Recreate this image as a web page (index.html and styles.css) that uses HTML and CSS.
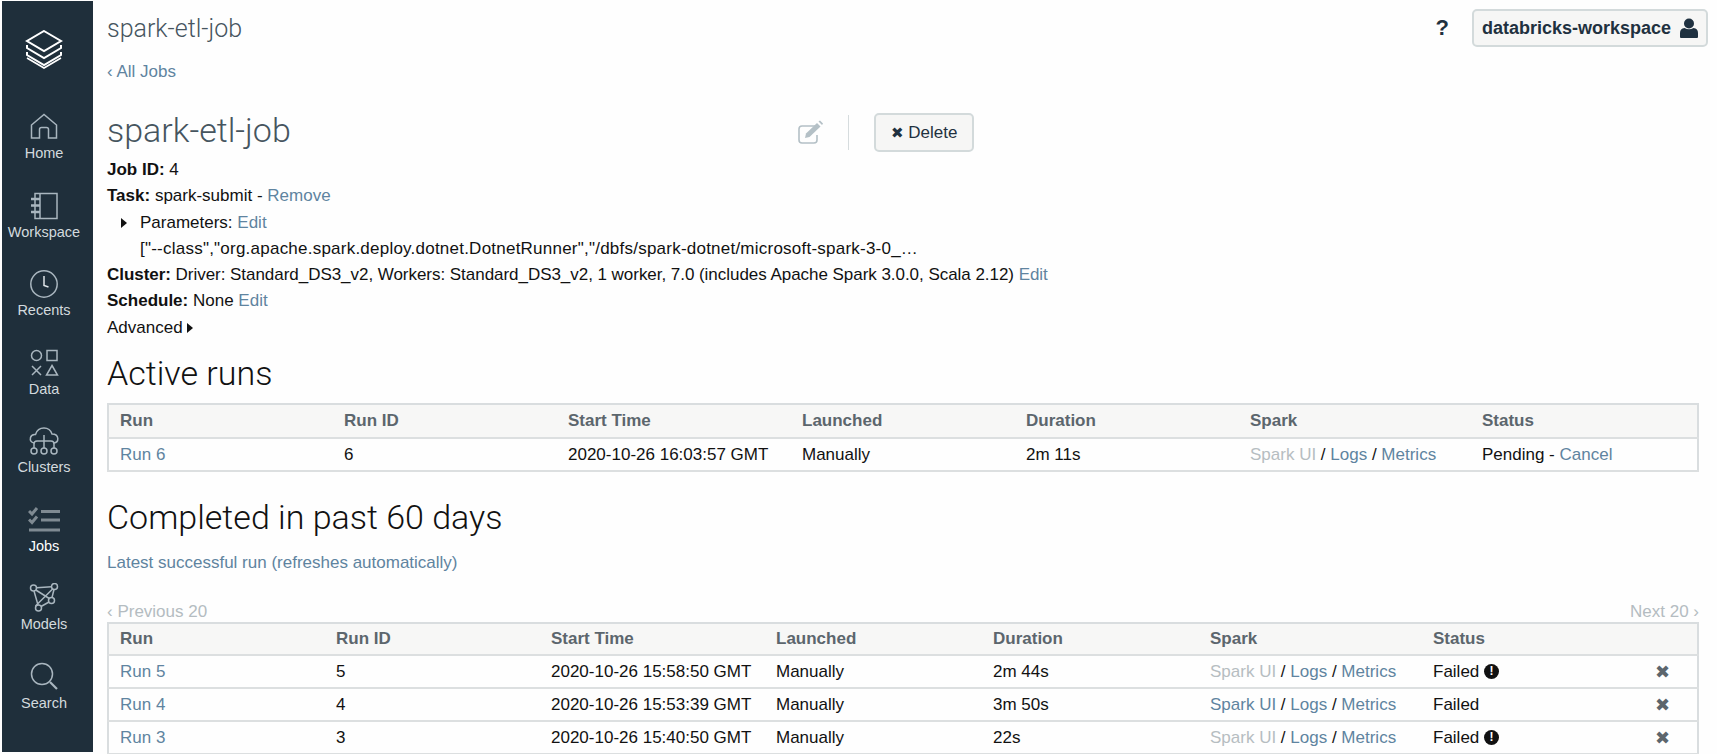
FILE: index.html
```html
<!DOCTYPE html>
<html lang="en">
<head>
    <meta charset="UTF-8">
    <title>spark-etl-job</title>
    <link rel="stylesheet" href="styles.css">
</head>
<body>
    <nav class="sidebar">
        <div class="logo">
            <svg width="38" height="40" viewBox="0 0 38 40" fill="none" stroke="#fff" stroke-width="2">
                <path d="M19 1 L36 11 L19 21 L2 11 Z"/>
                <path d="M2 15 V18 L19 28 L36 18 V15"/>
                <path d="M2 22 V25 L19 35 L36 25 V22"/>
                <path d="M2 28 L19 38 L36 28" stroke-width="1.6"/>
            </svg>
        </div>
        <a class="nav-item">
            <svg width="30" height="30" viewBox="0 0 30 30" fill="none" stroke="#a9b6bf" stroke-width="1.5">
                <path d="M2.5 13 L15 2.5 L27.5 13 V26 H19.5 V17.5 Q19.5 15.5 17.5 15.5 H12.5 Q10.5 15.5 10.5 17.5 V26 H2.5 Z"/>
            </svg>
            <span>Home</span>
        </a>
        <a class="nav-item">
            <svg width="30" height="30" viewBox="0 0 30 30" fill="none" stroke="#a9b6bf" stroke-width="1.5">
                <rect x="6" y="2.5" width="22" height="25"/>
                <path d="M11 2.5 V27.5"/>
                <path d="M2 8 H11 M2 14.5 H11 M2 21 H11" stroke-width="2.4"/>
            </svg>
            <span>Workspace</span>
        </a>
        <a class="nav-item">
            <svg width="30" height="30" viewBox="0 0 30 30" fill="none" stroke="#a9b6bf" stroke-width="1.5">
                <circle cx="15" cy="15" r="13.2"/>
                <path d="M15 7 V16.5 L19.5 18" stroke="#dfe5e9"/>
            </svg>
            <span>Recents</span>
        </a>
        <a class="nav-item">
            <svg width="30" height="30" viewBox="0 0 30 30" fill="none" stroke="#a9b6bf" stroke-width="1.5">
                <circle cx="7.5" cy="7.5" r="5"/>
                <rect x="18" y="2.5" width="10" height="10"/>
                <path d="M3 18 L12 27 M12 18 L3 27"/>
                <path d="M23 17.5 L28.5 27 H17.5 Z"/>
            </svg>
            <span>Data</span>
        </a>
        <a class="nav-item">
            <svg width="30" height="30" viewBox="0 0 30 30" fill="none" stroke="#a9b6bf" stroke-width="1.5">
                <path d="M5 17 Q0.5 16 1.5 11.5 Q2.5 8 6.5 8.5 Q8.5 2 15 2 Q21 2 23 8 Q28.5 8 28.8 12.5 Q29 16.5 25 17"/>
                <path d="M15 9 V22 M5 22 V18 Q5 15 8 15 H22 Q25 15 25 18 V22"/>
                <circle cx="5" cy="25" r="3"/>
                <circle cx="15" cy="25" r="3"/>
                <circle cx="25" cy="25" r="3"/>
            </svg>
            <span>Clusters</span>
        </a>
        <a class="nav-item active">
            <svg width="32" height="30" viewBox="0 0 32 30" fill="none" stroke="#7f8a92" stroke-width="3">
                <path d="M13 6.5 H32 M13 15 H32 M1 25 H32"/>
                <path d="M1 6 L4 9 L9 3 M1 14.5 L4 17.5 L9 11.5" stroke-width="3"/>
            </svg>
            <span>Jobs</span>
        </a>
        <a class="nav-item">
            <svg width="30" height="30" viewBox="0 0 30 30" fill="none" stroke="#a9b6bf" stroke-width="1.5">
                <circle cx="4.5" cy="5" r="3"/>
                <circle cx="25.5" cy="3.5" r="3"/>
                <circle cx="22.5" cy="17.5" r="3"/>
                <circle cx="9.5" cy="25" r="3"/>
                <path d="M7.5 4.7 L22.5 3.7 M25 6.5 L23 14.5 M20 19 L12 23.5 M9 22 L5 8 M6.8 7 L20.3 15.5 M23.6 6 L6.5 23"/>
            </svg>
            <span>Models</span>
        </a>
        <a class="nav-item">
            <svg width="30" height="30" viewBox="0 0 30 30" fill="none" stroke="#a9b6bf" stroke-width="1.5">
                <circle cx="13" cy="12" r="10.5"/>
                <path d="M21 20 L28 27" stroke-width="2.2"/>
            </svg>
            <span>Search</span>
        </a>
    </nav>

    <main class="content">
        <header class="topbar">
            <div class="page-name">spark-etl-job</div>
            <div class="help">?</div>
            <button class="account">
                databricks-workspace
                <svg width="18" height="20" viewBox="0 0 18 20" fill="#1f3140">
                    <circle cx="9" cy="5.5" r="5"/>
                    <path d="M0 19 V15 Q0 10.5 4.5 10 Q9 12.5 13.5 10 Q18 10.5 18 15 V19 Q18 20 17 20 H1 Q0 20 0 19 Z"/>
                </svg>
            </button>
        </header>
        <a class="back">&lsaquo; All Jobs</a>

        <div class="job-head">
            <h1>spark-etl-job</h1>
            <svg class="edit-icon" width="26" height="24" viewBox="0 0 26 24" fill="none" stroke="#b4c0c6" stroke-width="1.6">
                <path d="M18 6 H4 Q1 6 1 9 V20 Q1 23 4 23 H16 Q19 23 19 20 V15"/>
                <path d="M7 18 L8 13.5 L19 3 L22.5 6.5 L11.5 17 Z" fill="#b4c0c6" stroke="none"/>
                <path d="M20.5 1.5 L22 0.5 L25 3.5 L24 5 Z" fill="#b4c0c6" stroke="none"/>
            </svg>
            <div class="divider"></div>
            <button class="delete"><span class="x">&#10006;</span> Delete</button>
        </div>

        <div class="details">
            <p><b>Job ID:</b> 4</p>
            <p><b>Task:</b> spark-submit - <a>Remove</a></p>
            <p class="indent"><span class="caret caret-param"></span>Parameters: <a>Edit</a></p>
            <p class="indent args">["--class","org.apache.spark.deploy.dotnet.DotnetRunner","/dbfs/spark-dotnet/microsoft-spark-3-0_&hellip;</p>
            <p class="cluster"><b>Cluster:</b> Driver: Standard_DS3_v2, Workers: Standard_DS3_v2, 1 worker, 7.0 (includes Apache Spark 3.0.0, Scala 2.12) <a>Edit</a></p>
            <p><b>Schedule:</b> None <a>Edit</a></p>
            <p>Advanced <span class="caret"></span></p>
        </div>

        <h2 class="active-title">Active runs</h2>
        <table class="runs runs-active">
            <thead>
                <tr><th>Run</th><th>Run ID</th><th>Start Time</th><th>Launched</th><th>Duration</th><th>Spark</th><th>Status</th></tr>
            </thead>
            <tbody>
                <tr>
                    <td><a>Run 6</a></td><td>6</td><td>2020-10-26 16:03:57 GMT</td><td>Manually</td><td>2m 11s</td>
                    <td><a class="off">Spark UI</a> / <a>Logs</a> / <a>Metrics</a></td>
                    <td>Pending - <a>Cancel</a></td>
                </tr>
            </tbody>
        </table>

        <h2 class="completed-title">Completed in past 60 days</h2>
        <a class="latest">Latest successful run (refreshes automatically)</a>
        <div class="pager"><span>&lsaquo; Previous 20</span><span>Next 20 &rsaquo;</span></div>
        <table class="runs runs-done">
            <thead>
                <tr><th>Run</th><th>Run ID</th><th>Start Time</th><th>Launched</th><th>Duration</th><th>Spark</th><th>Status</th><th></th></tr>
            </thead>
            <tbody>
                <tr>
                    <td><a>Run 5</a></td><td>5</td><td>2020-10-26 15:58:50 GMT</td><td>Manually</td><td>2m 44s</td>
                    <td><a class="off">Spark UI</a> / <a>Logs</a> / <a>Metrics</a></td>
                    <td>Failed <span class="alert">!</span></td><td class="remove">&#10006;</td>
                </tr>
                <tr>
                    <td><a>Run 4</a></td><td>4</td><td>2020-10-26 15:53:39 GMT</td><td>Manually</td><td>3m 50s</td>
                    <td><a>Spark UI</a> / <a>Logs</a> / <a>Metrics</a></td>
                    <td>Failed</td><td class="remove">&#10006;</td>
                </tr>
                <tr>
                    <td><a>Run 3</a></td><td>3</td><td>2020-10-26 15:40:50 GMT</td><td>Manually</td><td>22s</td>
                    <td><a class="off">Spark UI</a> / <a>Logs</a> / <a>Metrics</a></td>
                    <td>Failed <span class="alert">!</span></td><td class="remove">&#10006;</td>
                </tr>
            </tbody>
        </table>
    </main>
</body>
</html>
```

FILE: styles.css
```css
html, body {
    height: 100%;
}
body {
    margin: 0;
    height: 754px;
    overflow: hidden;
    display: flex;
    background-color: #fefefe;
    color: #111;
    font-family: "Liberation Sans", Arial, sans-serif;
    font-size: 17px;
}
a {
    color: #5f84a0;
}

/* left nav */
.sidebar {
    flex: none;
    width: 84px;
    margin: 1px 0 2px 2px;
    padding-right: 7px;
    background-color: #1f2f3b;
    display: flex;
    flex-direction: column;
    align-items: center;
}
.logo {
    height: 103px;
    padding-top: 29px;
    box-sizing: border-box;
}
.nav-item {
    height: 78.5px;
    display: flex;
    flex-direction: column;
    align-items: center;
    padding-top: 8px;
    box-sizing: border-box;
    color: #d3dade;
    font-size: 14.5px;
}
.nav-item span {
    margin-top: 3px;
}
.nav-item.active {
    color: #fff;
}

/* main column */
.content {
    flex: 1;
    min-width: 0;
    padding: 0 18px 0 14px;
}
.topbar {
    display: flex;
    align-items: center;
    height: 56px;
}
.page-name {
    flex: 1;
    font-family: Roboto, sans-serif;
    font-weight: 300;
    font-size: 25px;
    color: #46555f;
}
.help {
    font-weight: bold;
    font-size: 22px;
    color: #1f3140;
    margin-right: 23px;
}
.account {
    display: flex;
    align-items: center;
    gap: 9px;
    width: 236px;
    height: 38px;
    margin-right: -9px;
    padding: 0 0 0 8px;
    background-color: #f6f6f5;
    border: 2px solid #d3dadb;
    border-radius: 5px;
    font-family: "Liberation Sans", Arial, sans-serif;
    font-weight: bold;
    font-size: 18px;
    color: #1f3140;
}
.back {
    display: block;
    height: 46px;
    line-height: 32px;
}
.job-head {
    display: flex;
    align-items: center;
    height: 50px;
    margin-top: 5px;
}
h1 {
    width: 691px;
    margin: 0 0 4px;
    font-family: Roboto, sans-serif;
    font-weight: 300;
    font-size: 34px;
    color: #46555f;
}
.edit-icon {
    margin-right: 24px;
}
.divider {
    width: 1px;
    height: 35px;
    background-color: #d6dcde;
    margin-right: 25px;
}
.delete {
    width: 100px;
    height: 39px;
    padding-top: 3px;
    background-color: #f6f6f5;
    border: 2px solid #d3dadb;
    border-radius: 5px;
    font-family: "Liberation Sans", Arial, sans-serif;
    font-size: 17px;
    color: #1f3140;
}
.delete .x {
    font-size: 15px;
}

.details p {
    margin: 0;
    height: 26.3px;
    line-height: 26.3px;
    white-space: nowrap;
}
.details .indent {
    padding-left: 33px;
}
.details .args {
    letter-spacing: 0.23px;
}
.details .cluster {
    letter-spacing: -0.04px;
}
.caret {
    display: inline-block;
    border-left: 6px solid #111;
    border-top: 5px solid transparent;
    border-bottom: 5px solid transparent;
}
.caret-param {
    margin: 0 13.5px 0 -19.5px;
}

h2 {
    margin: 0;
    font-family: Roboto, sans-serif;
    font-weight: 300;
    font-size: 34px;
    color: #111;
}
.active-title {
    margin-top: 8px;
    height: 54px;
    line-height: 48px;
}
.completed-title {
    margin-top: 21px;
    height: 48px;
    line-height: 48px;
}
.latest {
    display: block;
    margin-top: 9px;
    line-height: 26px;
}
.pager {
    display: flex;
    justify-content: space-between;
    margin-top: 24px;
    height: 22px;
    line-height: 24px;
    color: #b4bcc1;
}

.runs {
    width: 1592px;
    table-layout: fixed;
    border-collapse: collapse;
    border: 2px solid #d9dddf;
}
.runs th {
    height: 32px;
    padding: 0 0 0 11px;
    text-align: left;
    color: #5c666d;
    background-color: #f7f7f6;
    border-bottom: 2px solid #dcdfe0;
}
.runs-done th {
    height: 30px;
}
.runs td {
    height: 31px;
    padding: 0 0 0 11px;
    border-bottom: 2px solid #dcdfe0;
    white-space: nowrap;
}
.runs .off {
    color: #b6bdc1;
}
.runs-active th:nth-child(1) { width: 213px; }
.runs-active th:nth-child(2) { width: 213px; }
.runs-active th:nth-child(3) { width: 223px; }
.runs-active th:nth-child(4) { width: 213px; }
.runs-active th:nth-child(5) { width: 213px; }
.runs-active th:nth-child(6) { width: 221px; }
.runs-done th:nth-child(1) { width: 205px; }
.runs-done th:nth-child(2) { width: 204px; }
.runs-done th:nth-child(3) { width: 214px; }
.runs-done th:nth-child(4) { width: 206px; }
.runs-done th:nth-child(5) { width: 206px; }
.runs-done th:nth-child(6) { width: 212px; }
.runs-done th:nth-child(7) { width: 218px; }
.runs td.remove {
    padding-left: 4px;
    color: #5c666d;
    font-size: 18px;
}
.alert {
    display: inline-block;
    width: 15px;
    height: 15px;
    line-height: 15px;
    border-radius: 50%;
    background-color: #111;
    color: #fff;
    font-size: 12px;
    font-weight: bold;
    text-align: center;
    vertical-align: 2px;
}
```
